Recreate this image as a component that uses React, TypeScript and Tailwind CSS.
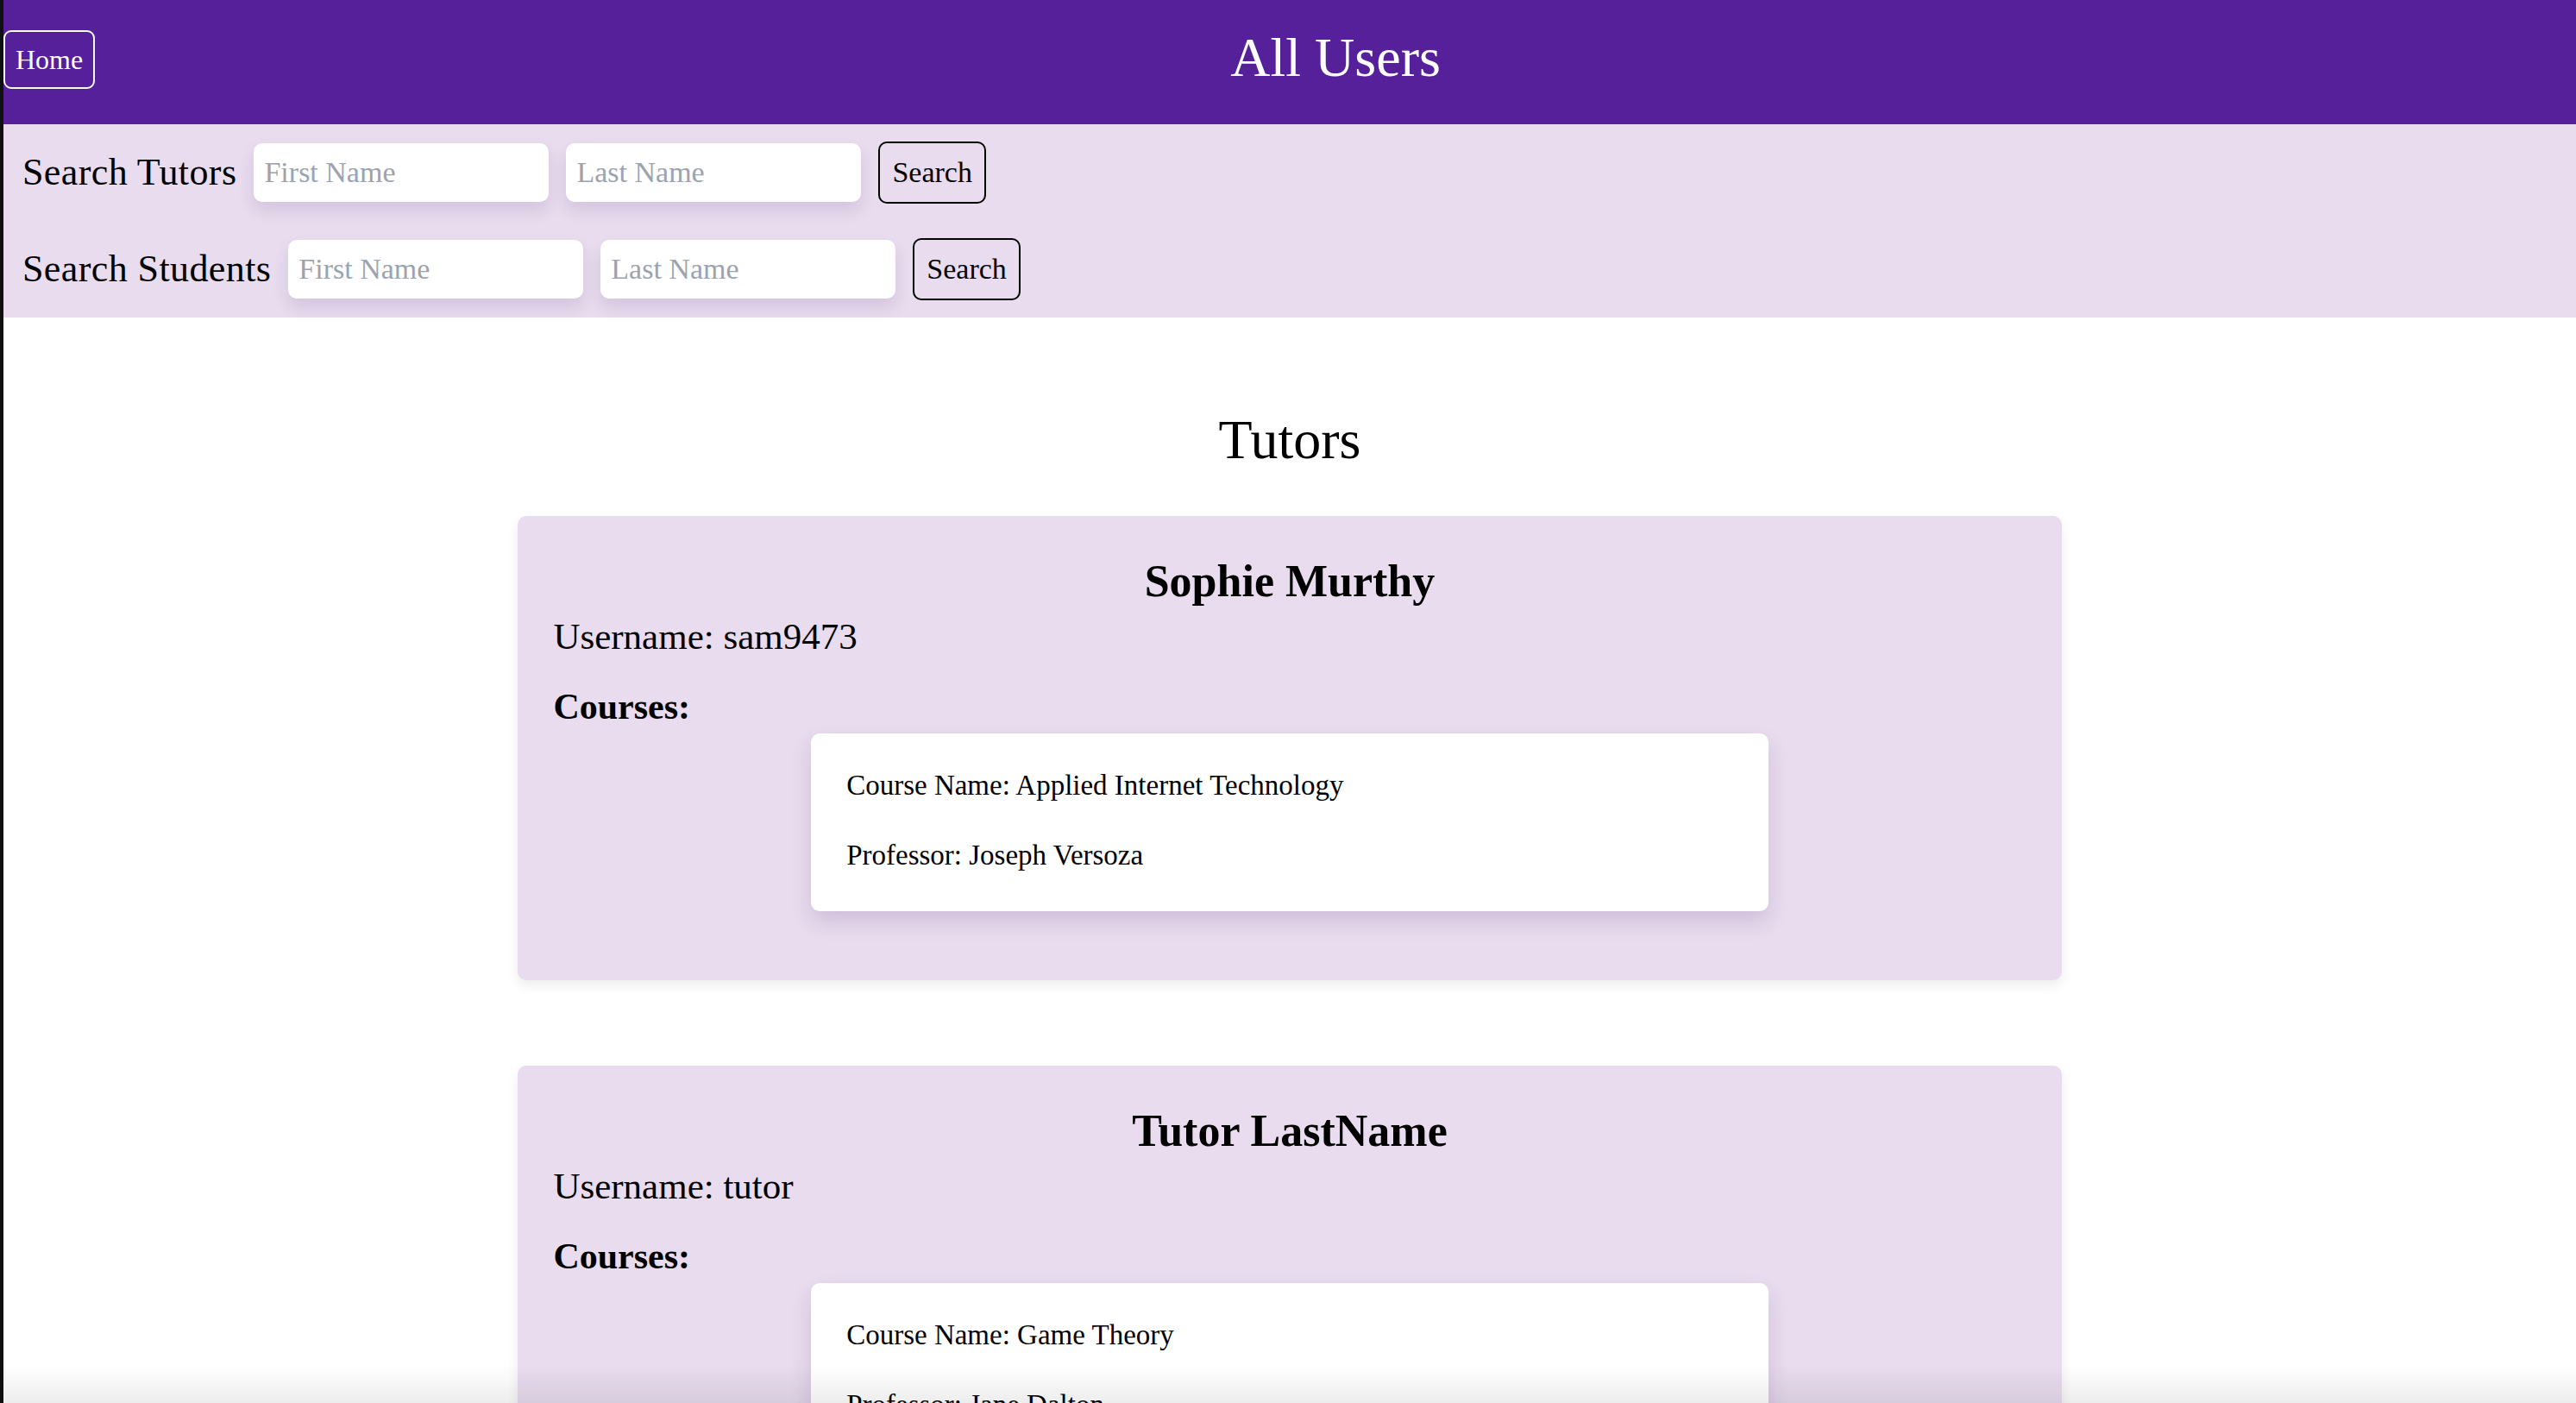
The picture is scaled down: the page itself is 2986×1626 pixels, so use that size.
const tutors = [
  {
    id: 1,
    name: "Sophie Murthy",
    username: "sam9473",
    courses: [{ name: "Applied Internet Technology", professor: "Joseph Versoza" }],
  },
  {
    id: 2,
    name: "Tutor LastName",
    username: "tutor",
    courses: [{ name: "Game Theory", professor: "Jane Dalton" }],
  },
];

const students = [
  {
    id: 3,
    name: "Student LastName",
    username: "student",
    courses: [{ name: "Data Structures", professor: "Evan Korth" }],
  },
];

type User = (typeof tutors)[number];

function SearchRow({ label }: { label: string }) {
  return (
    <div className="flex items-center gap-[20px]">
      <span className="text-[44px] leading-none tracking-[0.4px] text-black">{label}</span>
      <input
        placeholder="First Name"
        className="w-[342px] h-[68px] rounded-[10px] bg-white px-[12px] text-[34px] text-black placeholder:text-[#9ca3af] shadow-[0_10px_18px_rgba(80,40,110,0.13)] outline-none"
      />
      <input
        placeholder="Last Name"
        className="w-[342px] h-[68px] rounded-[10px] bg-white px-[12px] text-[34px] text-black placeholder:text-[#9ca3af] shadow-[0_10px_18px_rgba(80,40,110,0.13)] outline-none"
      />
      <button className="h-[72px] px-[14px] border-2 border-black rounded-[10px] text-[34px] leading-none text-black">
        Search
      </button>
    </div>
  );
}

function UserCard({ user }: { user: User }) {
  return (
    <div className="w-[60%] mx-auto bg-[#e8dcee] rounded-[10px] shadow-[0_6px_14px_rgba(0,0,0,0.08)] px-[41px] pt-[50px] pb-[80px]">
      <h2 className="text-[52px] font-bold leading-none text-center text-black">{user.name}</h2>
      <p className="mt-[16px] text-[43px] leading-none text-black">Username: {user.username}</p>
      <p className="mt-[39px] text-[42px] font-bold leading-none text-black">Courses:</p>
      {user.courses.map((course) => (
        <div
          key={course.name}
          className="mt-[10px] w-[65%] mx-auto bg-white rounded-[10px] shadow-[0_12px_24px_rgba(80,40,110,0.16)] px-[41px] pt-[44px] pb-[48px]"
        >
          <p className="text-[33px] leading-none text-black">Course Name: {course.name}</p>
          <p className="mt-[48px] text-[33px] leading-none text-black">Professor: {course.professor}</p>
        </div>
      ))}
    </div>
  );
}

export default function App() {
  return (
    <div
      className="min-h-screen bg-white border-l-4 border-[#101010]"
      style={{ fontFamily: '"Liberation Serif", "Times New Roman", serif' }}
    >
      <header className="flex items-start h-[144px] bg-[#55209a]">
        <button className="mt-[35px] px-[12px] py-[16px] border-2 border-white rounded-[9px] text-[32px] leading-none text-white">
          Home
        </button>
        <h1 className="flex-1 mt-[35px] text-center text-[64px] leading-none text-white">All Users</h1>
      </header>

      <section className="flex flex-col gap-[40px] bg-[#e8dcee] py-[20px] pl-[22px]">
        <SearchRow label="Search Tutors" />
        <SearchRow label="Search Students" />
      </section>

      <main className="pb-[100px]">
        <h2 className="mt-[110px] mb-[56px] text-center text-[64px] leading-none text-black">Tutors</h2>
        <div className="flex flex-col gap-[99px]">
          {tutors.map((t) => (
            <UserCard key={t.id} user={t} />
          ))}
        </div>

        <h2 className="mt-[110px] mb-[56px] text-center text-[64px] leading-none text-black">Students</h2>
        <div className="flex flex-col gap-[99px]">
          {students.map((s) => (
            <UserCard key={s.id} user={s} />
          ))}
        </div>
      </main>

      <div className="pointer-events-none fixed bottom-0 left-0 right-0 h-[44px] bg-gradient-to-b from-transparent to-[rgba(0,0,0,0.07)]" />
    </div>
  );
}
